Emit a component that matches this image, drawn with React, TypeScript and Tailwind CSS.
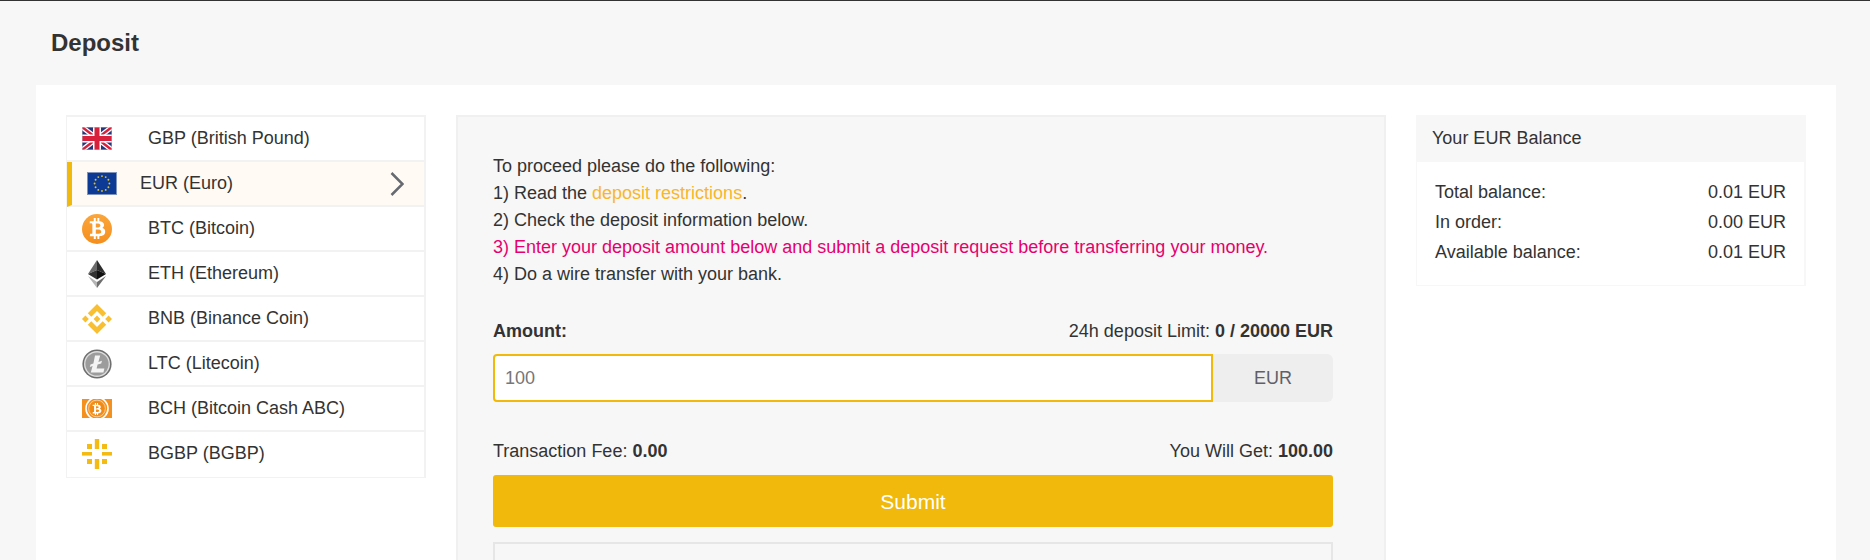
import React from "react";
import { FaBtc } from "react-icons/fa";

const UK = () => (
  <svg width="30" height="23" viewBox="0 0 60 46" className="block">
    <rect width="60" height="46" fill="#27357a" />
    <path d="M0 0L60 46M60 0L0 46" stroke="#fff" strokeWidth="10" />
    <path d="M0 0L60 46M60 0L0 46" stroke="#d8203c" strokeWidth="5" />
    <path d="M30 0V46M0 23H60" stroke="#fff" strokeWidth="16" />
    <path d="M30 0V46M0 23H60" stroke="#d8203c" strokeWidth="10" />
    <rect x="0.5" y="0.5" width="59" height="45" fill="none" stroke="#b9bcc8" />
  </svg>
);

const EU = () => {
  const stars = Array.from({ length: 12 }, (_, i) => {
    const a = (i * Math.PI) / 6;
    return { x: 15 + 7.4 * Math.sin(a), y: 11.5 - 7.4 * Math.cos(a) };
  });
  return (
    <svg width="30" height="23" viewBox="0 0 30 23" className="block">
      <rect width="30" height="23" fill="#0d3a94" />
      <rect x="0.5" y="0.5" width="29" height="22" fill="none" stroke="#7f93bd" />
      {stars.map((s, i) => (
        <circle key={i} cx={s.x} cy={s.y} r="0.95" fill="#e8c320" />
      ))}
    </svg>
  );
};

const BTC = () => (
  <div className="w-[30px] h-[30px] rounded-full bg-gradient-to-b from-[#fba53a] to-[#f58f1d] flex items-center justify-center">
    <FaBtc className="text-white text-[21px]" />
  </div>
);

const ETH = () => (
  <svg width="18" height="28" viewBox="0 0 18 28" className="block">
    <polygon points="9,0 0,14 9,10" fill="#6b6b6b" />
    <polygon points="9,0 18,14 9,10" fill="#2e2e2e" />
    <polygon points="0,14 9,10 9,19.5" fill="#333" />
    <polygon points="18,14 9,10 9,19.5" fill="#111" />
    <polygon points="0,16 9,22 9,28" fill="#b5b5b5" />
    <polygon points="18,16 9,22 9,28" fill="#6e6e6e" />
  </svg>
);

const BNB = () => (
  <svg width="30" height="30" viewBox="0 0 30 30" className="block">
    <g fill="#f8bf33">
      <polygon points="15,0 24.2,9.2 20.7,12.7 15,7 9.3,12.7 5.8,9.2" />
      <polygon points="15,30 24.2,20.8 20.7,17.3 15,23 9.3,17.3 5.8,20.8" />
      <polygon points="3.4,11.6 6.8,15 3.4,18.4 0,15" />
      <polygon points="26.6,11.6 30,15 26.6,18.4 23.2,15" />
      <polygon points="15,11.6 18.4,15 15,18.4 11.6,15" />
    </g>
  </svg>
);

const LTC = () => (
  <svg width="30" height="30" viewBox="0 0 30 30" className="block">
    <circle cx="15" cy="15" r="14.6" fill="#6f6f6f" />
    <circle cx="15" cy="15" r="13" fill="#dcdcdc" />
    <circle cx="15" cy="15" r="11.6" fill="#9c9c9c" />
    <polygon points="13,6.5 18.2,6.5 16.4,13 20,11.8 19.2,14.4 15.6,15.6 14.6,19.6 22.4,19.6 21.4,23.5 8.8,23.5 10.6,17 7.8,18 8.5,15.5 11.4,14.4" fill="#f4f4f4" />
  </svg>
);

const BCH = () => (
  <div className="relative w-[30px] h-[19px] overflow-hidden bg-[#f4901e] flex items-center justify-center">
    <svg width="30" height="19" viewBox="0 0 30 19" className="absolute inset-0 block">
      <circle cx="15" cy="9.5" r="11" fill="none" stroke="#fff" strokeWidth="1.6" />
      <circle cx="15" cy="9.5" r="6.8" fill="#f18a12" />
      <circle cx="15" cy="9.5" r="8.4" fill="none" stroke="#fbd9ae" strokeWidth="0.8" />
    </svg>
    <FaBtc className="relative text-white text-[12px]" />
  </div>
);

const BGBP = () => (
  <svg width="30" height="30" viewBox="0 0 30 30" className="block">
    <g fill="#f4bb13">
      <rect x="12.8" y="0" width="4.4" height="10" />
      <rect x="12.8" y="20" width="4.4" height="10" />
      <rect x="0" y="13" width="10" height="3.6" />
      <rect x="20" y="13" width="10" height="3.6" />
      <rect x="5" y="5" width="5" height="5" />
      <rect x="20" y="5" width="5" height="5" />
      <rect x="5" y="20" width="5" height="5" />
      <rect x="20" y="20" width="5" height="5" />
    </g>
  </svg>
);

const coins = [
  { name: "GBP (British Pound)", icon: <UK /> },
  { name: "EUR (Euro)", icon: <EU />, active: true },
  { name: "BTC (Bitcoin)", icon: <BTC /> },
  { name: "ETH (Ethereum)", icon: <ETH /> },
  { name: "BNB (Binance Coin)", icon: <BNB /> },
  { name: "LTC (Litecoin)", icon: <LTC /> },
  { name: "BCH (Bitcoin Cash ABC)", icon: <BCH /> },
  { name: "BGBP (BGBP)", icon: <BGBP /> },
];

const balances = [
  ["Total balance:", "0.01 EUR"],
  ["In order:", "0.00 EUR"],
  ["Available balance:", "0.01 EUR"],
];

export default function App() {
  return (
    <div className="h-[560px] overflow-hidden bg-[#f7f7f7] border-t border-[#333333] font-['Liberation_Sans',Arial,sans-serif] text-[18px] leading-[27px] text-[#333333]">
      <div className="h-[84px] pl-[51px] pt-[26px]">
        <h1 className="text-[24px] leading-[32px] font-bold">Deposit</h1>
      </div>
      <div className="ml-[36px] w-[1800px] bg-white p-[30px] flex items-start gap-[30px] h-[600px]">
        <ul className="w-[360px] shrink-0 border-t-2 border-l border-r-2 border-[#f2f2f2]">
          {coins.map((c, i) =>
            c.active ? (
              <li
                key={c.name}
                className="h-[45px] flex items-center pl-[15px] pr-[20px] bg-[#fffaf3] border-l-[5px] border-l-[#f0b90b] border-b-2 border-b-[#f2f2f2]"
              >
                <span className="w-[30px] flex justify-center">{c.icon}</span>
                <span className="ml-[23px] flex-1">{c.name}</span>
                <svg width="14" height="24" viewBox="0 0 14 24" fill="none" stroke="#666a70" strokeWidth="2.5">
                  <path d="M1.5 1L12.5 12L1.5 23" />
                </svg>
              </li>
            ) : i === coins.length - 1 ? (
              <li
                key={c.name}
                className="h-[46px] pb-[2px] flex items-center pl-[15px] border-b border-b-[#f2f2f2]"
              >
                <span className="w-[30px] flex justify-center">{c.icon}</span>
                <span className="ml-[36px]">{c.name}</span>
              </li>
            ) : (
              <li
                key={c.name}
                className="h-[45px] flex items-center pl-[15px] border-b-2 border-b-[#f2f2f2]"
              >
                <span className="w-[30px] flex justify-center">{c.icon}</span>
                <span className="ml-[36px]">{c.name}</span>
              </li>
            )
          )}
        </ul>

        <div className="w-[930px] shrink-0 h-[600px] bg-[#f7f7f7] border-2 border-[#f0f0f0] pl-[35px] pr-[51px] pt-[36px]">
          <p>To proceed please do the following:</p>
          <p>
            1) Read the <span className="text-[#f8b62b]">deposit restrictions</span>.
          </p>
          <p>2) Check the deposit information below.</p>
          <p className="text-[#e6006e]">3) Enter your deposit amount below and submit a deposit request before transferring your money.</p>
          <p>4) Do a wire transfer with your bank.</p>

          <div className="flex justify-between mt-[30px] mb-[9px]">
            <span className="font-bold">Amount:</span>
            <span>
              24h deposit Limit: <b>0 / 20000 EUR</b>
            </span>
          </div>
          <div className="flex h-[48px]">
            <input
              readOnly
              value="100"
              className="flex-1 min-w-0 h-full bg-white border-2 border-[#f0b90b] rounded-l-[4px] pl-[10px] text-[18px] text-[#777777] outline-none"
            />
            <div className="w-[120px] flex items-center justify-center bg-[#eeeeee] rounded-r-[6px] text-[#5f5f69]">EUR</div>
          </div>

          <div className="flex justify-between mt-[36px] mb-[10px]">
            <span>
              Transaction Fee: <b>0.00</b>
            </span>
            <span>
              You Will Get: <b>100.00</b>
            </span>
          </div>
          <button className="block w-full h-[52px] bg-[#f0b90b] rounded-[3px] text-white text-[21px]">Submit</button>
          <div className="mt-[15px] h-[200px] border-2 border-[#e6e6e6]"></div>
        </div>

        <div className="w-[390px] shrink-0 border-l border-r-2 border-b border-[#f7f7f7]">
          <div className="h-[47px] flex items-center pl-[15px] bg-[#f7f7f7]">Your EUR Balance</div>
          <div className="pt-[15px] pb-[18px] pl-[18px] pr-[18px]">
            {balances.map(([k, v]) => (
              <div key={k} className="flex justify-between h-[30px] leading-[30px]">
                <span>{k}</span>
                <span>{v}</span>
              </div>
            ))}
          </div>
        </div>
      </div>
    </div>
  );
}
